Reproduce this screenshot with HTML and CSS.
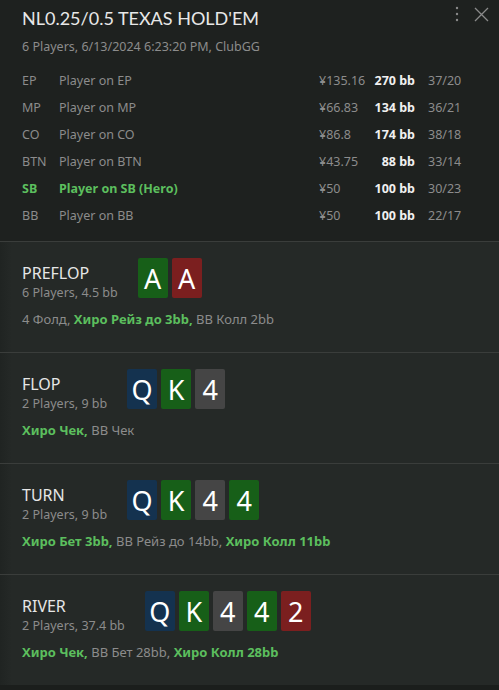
FILE: index.html
```html
<!DOCTYPE html>
<html lang="ru">

<head>
  <meta charset="UTF-8">
  <meta name="viewport" content="width=device-width, initial-scale=1.0">
  <title>Hand History</title>
  <link rel="stylesheet" href="styles.css">
</head>

<body>
  <div class="panel">
    <div class="scroll"></div>
    <header class="top">
      <div class="tools">
        <svg width="6" height="16" viewBox="0 0 6 16"><circle cx="3" cy="2" r="1.2" fill="#8a8a8a"/><circle cx="3" cy="8" r="1.2" fill="#8a8a8a"/><circle cx="3" cy="14" r="1.2" fill="#8a8a8a"/></svg>
        <svg width="15" height="15" viewBox="0 0 15 15"><path d="M1 1L14 14M14 1L1 14" stroke="#8a8a8a" stroke-width="1.3"/></svg>
      </div>
      <h1>NL0.25/0.5 TEXAS HOLD'EM</h1>
      <p class="meta">6 Players, 6/13/2024 6:23:20 PM, ClubGG</p>
      <div class="players">
        <div class="row"><span>EP</span><span>Player on EP</span><span>¥135.16</span><b>270 bb</b><span class="ratio">37/20</span></div>
        <div class="row"><span>MP</span><span>Player on MP</span><span>¥66.83</span><b>134 bb</b><span class="ratio">36/21</span></div>
        <div class="row"><span>CO</span><span>Player on CO</span><span>¥86.8</span><b>174 bb</b><span class="ratio">38/18</span></div>
        <div class="row"><span>BTN</span><span>Player on BTN</span><span>¥43.75</span><b>88 bb</b><span class="ratio">33/14</span></div>
        <div class="row hero"><span>SB</span><span>Player on SB (Hero)</span><span>¥50</span><b>100 bb</b><span class="ratio">30/23</span></div>
        <div class="row"><span>BB</span><span>Player on BB</span><span>¥50</span><b>100 bb</b><span class="ratio">22/17</span></div>
      </div>
    </header>

    <section class="street">
      <div class="head">
        <div class="label">
          <h2>PREFLOP</h2>
          <p class="sub">6 Players, 4.5 bb</p>
        </div>
        <div class="cards">
          <span class="card green">A</span><span class="card red">A</span>
        </div>
      </div>
      <p class="actions">4 Фолд, <b>Хиро Рейз до 3bb,</b> BB Колл 2bb</p>
    </section>

    <section class="street">
      <div class="head">
        <div class="label">
          <h2>FLOP</h2>
          <p class="sub">2 Players, 9 bb</p>
        </div>
        <div class="cards">
          <span class="card blue">Q</span><span class="card green">K</span><span class="card gray">4</span>
        </div>
      </div>
      <p class="actions"><b>Хиро Чек,</b> BB Чек</p>
    </section>

    <section class="street">
      <div class="head">
        <div class="label">
          <h2>TURN</h2>
          <p class="sub">2 Players, 9 bb</p>
        </div>
        <div class="cards">
          <span class="card blue">Q</span><span class="card green">K</span><span class="card gray">4</span><span class="card green">4</span>
        </div>
      </div>
      <p class="actions"><b>Хиро Бет 3bb,</b> BB Рейз до 14bb, <b>Хиро Колл 11bb</b></p>
    </section>

    <section class="street">
      <div class="head">
        <div class="label">
          <h2>RIVER</h2>
          <p class="sub">2 Players, 37.4 bb</p>
        </div>
        <div class="cards">
          <span class="card blue">Q</span><span class="card green">K</span><span class="card gray">4</span><span class="card green">4</span><span class="card red">2</span>
        </div>
      </div>
      <p class="actions"><b>Хиро Чек,</b> BB Бет 28bb, <b>Хиро Колл 28bb</b></p>
    </section>
  </div>
</body>

</html>
```

FILE: styles.css
```css
body {
  margin: 0;
  background: #1b1e1c;
  font-family: "Noto Sans", sans-serif;
  color: #8c8c8c;
}

.panel {
  position: relative;
  width: 499px;
}

.scroll {
  position: absolute;
  right: 0;
  top: 0;
  width: 2px;
  height: 63px;
  background: #2e6d3b;
}

.top {
  position: relative;
  background: #1e211f;
  padding: 6px 22px 12px;
}

.tools {
  position: absolute;
  top: 6px;
  right: 10px;
  display: flex;
  gap: 14px;
  align-items: center;
}

h1 {
  margin: 0;
  font-family: Lato, "Noto Sans", sans-serif;
  font-size: 18px;
  font-weight: normal;
  color: #e8e8e8;
  line-height: 24px;
}

.meta {
  margin: 9px 0 12px;
  font-size: 12.5px;
  line-height: 16px;
}

.row {
  display: grid;
  grid-template-columns: 37px 260px 50px 46px auto;
  height: 27px;
  align-items: center;
  font-size: 12.5px;
}

.row b {
  color: #f0f0f0;
  text-align: right;
}

.row .ratio {
  padding-left: 13px;
}

.row.hero span:nth-child(1),
.row.hero span:nth-child(2) {
  color: #5cbf5e;
  font-weight: bold;
}

.street {
  background: linear-gradient(to right, #202422 0, #252927 12px);
  border-top: 1px solid #3a3d3b;
  padding: 16px 22px 25px;
}

.head {
  display: flex;
  align-items: flex-end;
  gap: 20px;
  height: 40px;
}

.label {
  margin-bottom: -3px;
}

h2 {
  margin: 0;
  font-size: 16px;
  font-weight: normal;
  color: #e6e6e6;
  line-height: 24px;
}

.sub {
  margin: 0;
  font-size: 12.5px;
  line-height: 16px;
}

.cards {
  display: flex;
  gap: 4px;
}

.card {
  width: 30px;
  height: 40px;
  border-radius: 2px;
  display: flex;
  align-items: center;
  justify-content: center;
  color: #fff;
  font-size: 27px;
}

.blue { background: #14324f; }
.green { background: #175f18; }
.gray { background: #454545; }
.red { background: #7b1f1f; }

.actions {
  margin: 13px 0 0;
  font-size: 13px;
  line-height: 16px;
}

.actions b {
  color: #5cbf5e;
}
```
